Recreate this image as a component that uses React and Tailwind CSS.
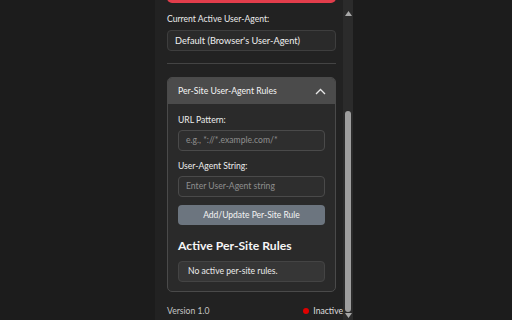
import React from 'react';

const font = { fontFamily: 'Lato, "Noto Sans", sans-serif' };

const Field = ({ label, placeholder }) => (
	<div className="flex flex-col">
		<label className="h-[10px] text-[8.6px] text-[#ececec] leading-[10px]">{label}</label>
		<div className="mt-[5px] h-[21px] rounded-[4px] border border-[#4a4a4a] bg-[#2e2e2e] px-[7px] flex items-center text-[8.6px] text-[#8e8e8e]">
			{placeholder}
		</div>
	</div>
);

const App = () => {
	return (
		<div className="w-[512px] h-[320px] bg-[#1c1c1c] flex justify-center overflow-hidden" style={font}>
			<div className="ml-[-4px] w-[188px] h-[320px] bg-[#222222] overflow-hidden pl-[12px] pr-[7px]">
				<div className="-mt-[30px] h-[33px] rounded-[5px] bg-[#e23d4b]" />
				<div className="mt-[11px] h-[10px] text-[8.6px] text-[#ececec] leading-[10px]">Current Active User-Agent:</div>
				<div className="mt-[6px] h-[21px] rounded-[4px] border border-[#3e3e3e] bg-[#2a2a2a] px-[7px] flex items-center text-[9.2px] text-[#f0f0f0]">
					Default (Browser's User-Agent)
				</div>
				<div className="mt-[12px] h-px bg-[#444]" />
				<div className="mt-[13px] rounded-[5px] border border-[#4a4a4a] bg-[#2a2a2a] overflow-hidden">
					<div className="h-[26px] bg-[#4b4b4b] flex items-center justify-between pl-[10px] pr-[9px]">
						<span className="text-[8.7px] text-[#f4f4f4]">Per-Site User-Agent Rules</span>
						<svg width="11" height="7" viewBox="0 0 11 7" fill="none">
							<path d="M1 6 L5.5 1.5 L10 6" stroke="#e8e8e8" strokeWidth="1.3" />
						</svg>
					</div>
					<div className="px-[10px] pt-[11px] pb-[9px] flex flex-col">
						<Field label="URL Pattern:" placeholder="e.g., *://*.example.com/*" />
						<div className="mt-[10px]">
							<Field label="User-Agent String:" placeholder="Enter User-Agent string" />
						</div>
						<div className="mt-[8px] h-[20px] rounded-[4px] bg-[#6c757f] flex items-center justify-center text-[8.5px] text-[#f4f4f4]">
							Add/Update Per-Site Rule
						</div>
						<div className="mt-[14px] h-[13px] text-[12.2px] font-bold text-[#f6f6f6] leading-[13px]">Active Per-Site Rules</div>
						<div className="mt-[9px] h-[21px] rounded-[4px] border border-[#444] bg-[#363636] px-[9px] flex items-center text-[8.6px] text-[#ececec]">
							No active per-site rules.
						</div>
					</div>
				</div>
				<div className="mt-[11px] h-[16px] flex items-center justify-between">
					<span className="text-[8.6px] text-[#c4c4c4]">Version 1.0</span>
					<span className="flex items-center gap-[4px] text-[8.6px] text-[#dedede] mr-[-7px]">
						<span className="w-[6px] h-[6px] rounded-full bg-[#e00000]" />
						Inactive
					</span>
				</div>
			</div>
			<div className="w-[10px] h-[320px] bg-[#2b2b2b] flex flex-col items-center">
				<svg width="7" height="5" viewBox="0 0 7 5" className="mt-[11px]">
					<path d="M0 5 L3.5 0 L7 5 Z" fill="#a8a8a8" />
				</svg>
				<div className="mt-[95px] w-[6px] h-[201px] rounded-[3px] bg-[#9e9e9e]" />
				<svg width="7" height="5" viewBox="0 0 7 5" className="mt-[1px]">
					<path d="M0 0 L3.5 5 L7 0 Z" fill="#a8a8a8" />
				</svg>
			</div>
		</div>
	);
};

export default App;
